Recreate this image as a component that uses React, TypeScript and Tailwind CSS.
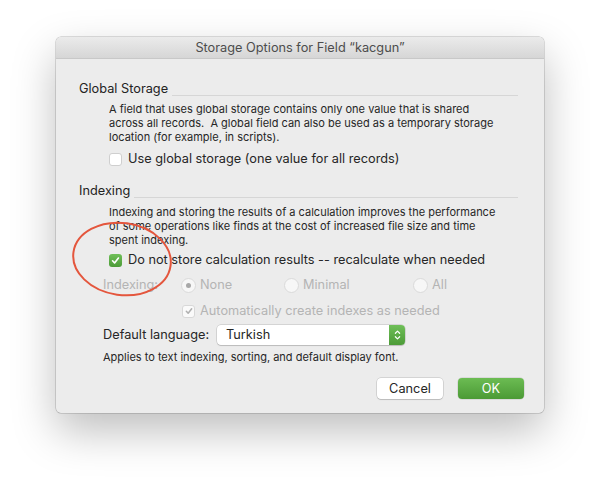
import React from "react";

function CheckMark({ className }: { className: string }) {
  return (
    <svg viewBox="0 0 12 12" className={className} fill="none" stroke="currentColor" strokeWidth={1.8} strokeLinecap="round" strokeLinejoin="round">
      <path d="M2.8 6.3l2.2 2.4 4.2-5.4" />
    </svg>
  );
}

function SectionHeader({ title }: { title: string }) {
  return (
    <div className="flex h-[16px] items-end">
      <span className="self-center text-[12.75px] leading-[16px] text-[#232323]">{title}</span>
      <div className="mb-[1px] ml-[4px] mr-[6px] h-px flex-1 bg-[#d6d6d6]" />
    </div>
  );
}

function Radio({ label, selected, width }: { label: string; selected?: boolean; width: string }) {
  return (
    <div className={`flex items-center ${width}`}>
      <span className="flex h-[15px] w-[15px] items-center justify-center rounded-full border border-[#dadada] bg-[#f7f7f7]">
        {selected && <span className="h-[5px] w-[5px] rounded-full bg-[#a8a8a8]" />}
      </span>
      <span className="ml-[4px] text-[12.75px] text-[#b4b4b4]">{label}</span>
    </div>
  );
}

export default function App() {
  return (
    <div className="relative h-[488px] w-[600px] overflow-hidden bg-white pl-[56px] pt-[37px] font-['Inter',sans-serif]">
      <div className="flex h-[376px] w-[488px] flex-col rounded-[5px] bg-[#ececec] shadow-[0_18px_44px_rgba(0,0,0,0.26),0_0_0_0.5px_rgba(0,0,0,0.25)]">
        {/* Title bar */}
        <div className="flex h-[22px] items-center justify-center rounded-t-[5px] border-b border-[#c8c8c8] bg-gradient-to-b from-[#ebebeb] to-[#d6d6d6] text-[12.75px] text-[#4d4d4d]">
          Storage Options for Field “kacgun”
        </div>

        <div className="flex flex-col pl-[23px] pr-[20px] pt-[22px]">
          {/* Global storage */}
          <SectionHeader title="Global Storage" />
          <p className="mt-[5px] pl-[30px] pr-[22px] text-[11px] leading-[14px] text-[#262626]">
            A field that uses global storage contains only one value that is shared across all records.&nbsp; A global field can also be used as a temporary storage location (for example, in scripts).
          </p>
          <div className="mt-[7px] flex h-[16px] items-center pl-[30px]">
            <span className="h-[13px] w-[13px] rounded-[3px] border border-[#cfcfcf] bg-white" />
            <span className="ml-[6px] text-[12.75px] text-[#262626]">Use global storage (one value for all records)</span>
          </div>

          {/* Indexing */}
          <div className="mt-[16px]">
            <SectionHeader title="Indexing" />
          </div>
          <p className="mt-[6px] pl-[30px] pr-[22px] text-[11px] leading-[14px] text-[#262626]">
            Indexing and storing the results of a calculation improves the performance of some operations like finds at the cost of increased file size and time spent indexing.
          </p>
          <div className="mt-[5px] flex h-[16px] items-center pl-[30px]">
            <span className="flex h-[13px] w-[13px] items-center justify-center rounded-[3px] bg-gradient-to-b from-[#6fbf58] to-[#4c9b37] text-white">
              <CheckMark className="h-[11px] w-[11px]" />
            </span>
            <span className="ml-[6px] text-[12.75px] text-[#262626]">Do not store calculation results -- recalculate when needed</span>
          </div>

          <div className="mt-[9px] flex h-[16px] items-center pl-[24px]">
            <span className="w-[78px] text-[12.75px] text-[#b4b4b4]">Indexing:</span>
            <Radio label="None" selected width="w-[103px]" />
            <Radio label="Minimal" width="w-[129px]" />
            <Radio label="All" width="w-[60px]" />
          </div>

          <div className="mt-[10px] flex h-[16px] items-center pl-[103px]">
            <span className="flex h-[13px] w-[13px] items-center justify-center rounded-[3px] border border-[#d8d8d8] bg-[#fafafa] text-[#b0b0b0]">
              <CheckMark className="h-[10px] w-[10px]" />
            </span>
            <span className="ml-[5px] text-[12.75px] text-[#b4b4b4]">Automatically create indexes as needed</span>
          </div>

          <div className="mt-[6px] flex h-[20px] items-center pl-[24px]">
            <span className="w-[114px] text-[12.75px] text-[#262626]">Default language:</span>
            <div className="flex h-[20px] w-[188px] items-center rounded-[4px] bg-white shadow-[0_0_0_0.5px_rgba(0,0,0,0.2),0_1px_1px_rgba(0,0,0,0.12)]">
              <span className="ml-[9px] flex-1 text-[12.75px] text-[#262626]">Turkish</span>
              <span className="flex h-[20px] w-[16px] flex-col items-center justify-center rounded-r-[4px] bg-gradient-to-b from-[#6fbf58] to-[#4c9b37] text-white">
                <svg viewBox="0 0 8 14" className="h-[12px] w-[7px]" fill="none" stroke="currentColor" strokeWidth={1.4} strokeLinecap="round" strokeLinejoin="round">
                  <path d="M1.5 5l2.5-2.5L6.5 5" />
                  <path d="M1.5 9l2.5 2.5L6.5 9" />
                </svg>
              </span>
            </div>
          </div>

          <p className="mt-[5px] pl-[24px] text-[11px] leading-[14px] text-[#262626]">
            Applies to text indexing, sorting, and default display font.
          </p>

          <div className="mt-[14px] flex justify-end gap-[15px]">
            <button className="h-[21px] w-[66px] rounded-[4px] bg-white text-[12.75px] text-[#262626] shadow-[0_0_0_0.5px_rgba(0,0,0,0.2),0_1px_1px_rgba(0,0,0,0.12)]">
              Cancel
            </button>
            <button className="h-[21px] w-[66px] rounded-[4px] bg-gradient-to-b from-[#6cbc53] to-[#4b9a35] text-[12.75px] text-white shadow-[0_0_0_0.5px_rgba(0,0,0,0.15)]">
              OK
            </button>
          </div>
        </div>
      </div>

      {/* Red annotation circle */}
      <svg className="pointer-events-none absolute left-[66px] top-[215px] h-[90px] w-[115px]" viewBox="0 0 115 90" fill="none">
        <ellipse cx="56" cy="44" rx="49" ry="36" transform="rotate(8 56 44)" stroke="#e4563d" strokeWidth="2" />
      </svg>
    </div>
  );
}
